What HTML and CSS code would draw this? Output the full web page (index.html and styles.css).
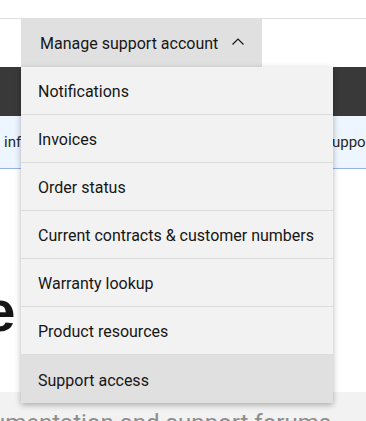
FILE: index.html
```html
<!DOCTYPE html>
<html lang="en">
<head>
  <meta charset="UTF-8" />
  <meta name="viewport" content="width=device-width, initial-scale=1.0"/>
  <title>Support</title>
  <link rel="stylesheet" href="styles.css">
</head>
<body>

  <div class="topbar"></div>

  <div class="navrow">
    <div class="konto">
      <button class="konto-knopf" type="button">
        <span>Manage support account</span>
        <svg class="chevron" width="16" height="16" viewBox="0 0 16 16">
          <path d="M2.5 10.5 L8 5 L13.5 10.5" fill="none" stroke="#161616" stroke-width="1.2"/>
        </svg>
      </button>
      <ul class="menue">
        <li>Notifications</li>
        <li>Invoices</li>
        <li>Order status</li>
        <li>Current contracts &amp; customer numbers</li>
        <li>Warranty lookup</li>
        <li>Product resources</li>
        <li class="hover">Support access</li>
      </ul>
    </div>
  </div>

  <div class="dunkel"></div>

  <div class="hinweis">
    <span>info</span>
    <span class="rechts">upport</span>
  </div>

  <div class="haupt">
    <h1>Welcome</h1>
  </div>

  <div class="grau">
    <p>umentation and support forums</p>
  </div>

</body>
</html>
```

FILE: styles.css
```css
* {
  box-sizing: border-box;
}

body {
  margin: 0;
  padding: 0;
  overflow: hidden;
  font-family: Roboto, "Noto Sans", sans-serif;
  color: #161616;
  background: #fff;
}

.topbar {
  height: 19px;
  border-bottom: 1px solid #e0e0e0;
}

.navrow {
  height: 48px;
  display: flex;
}

.konto {
  position: relative;
  margin-left: 21px;
}

.konto-knopf {
  display: flex;
  align-items: center;
  gap: 12px;
  width: 241px;
  height: 48px;
  padding: 0 0 0 19px;
  border: none;
  background: #e0e0e0;
  font-family: inherit;
  font-size: 16px;
  color: #161616;
}

.chevron {
  margin-top: -2px;
}

.menue {
  position: absolute;
  top: 100%;
  left: 0;
  width: 312px;
  margin: 0;
  padding: 0;
  list-style: none;
  background: #f2f2f2;
  box-shadow: 0 2px 6px rgba(0, 0, 0, 0.3);
  z-index: 10;
}

.menue li {
  height: 48px;
  display: flex;
  align-items: center;
  padding: 2px 0 0 17px;
  font-size: 16px;
  border-bottom: 1px solid #dcdcdc;
  white-space: nowrap;
}

.menue li:last-child {
  border-bottom: none;
}

.menue li.hover {
  background: #e0e0e0;
}

.dunkel {
  height: 49px;
  background: #393939;
}

.hinweis {
  height: 53px;
  display: flex;
  justify-content: space-between;
  align-items: center;
  padding: 0 0 0 4px;
  background: #edf5ff;
  border-bottom: 1px solid #97b4ee;
  font-size: 15px;
  color: #262626;
}

.rechts {
  margin-right: -10px;
}

.haupt {
  height: 223px;
  padding-top: 112px;
}

.haupt h1 {
  margin: 0;
  font-family: "Liberation Sans", Arial, sans-serif;
  font-weight: 700;
  font-size: 58px;
  line-height: 60px;
  white-space: nowrap;
  text-indent: -238px;
}

.grau {
  height: 40px;
  background: #f2f2f2;
  padding-top: 17px;
}

.grau p {
  margin: 0;
  font-size: 24px;
  color: #8d8d8d;
  white-space: nowrap;
  margin-left: -8px;
}
```
